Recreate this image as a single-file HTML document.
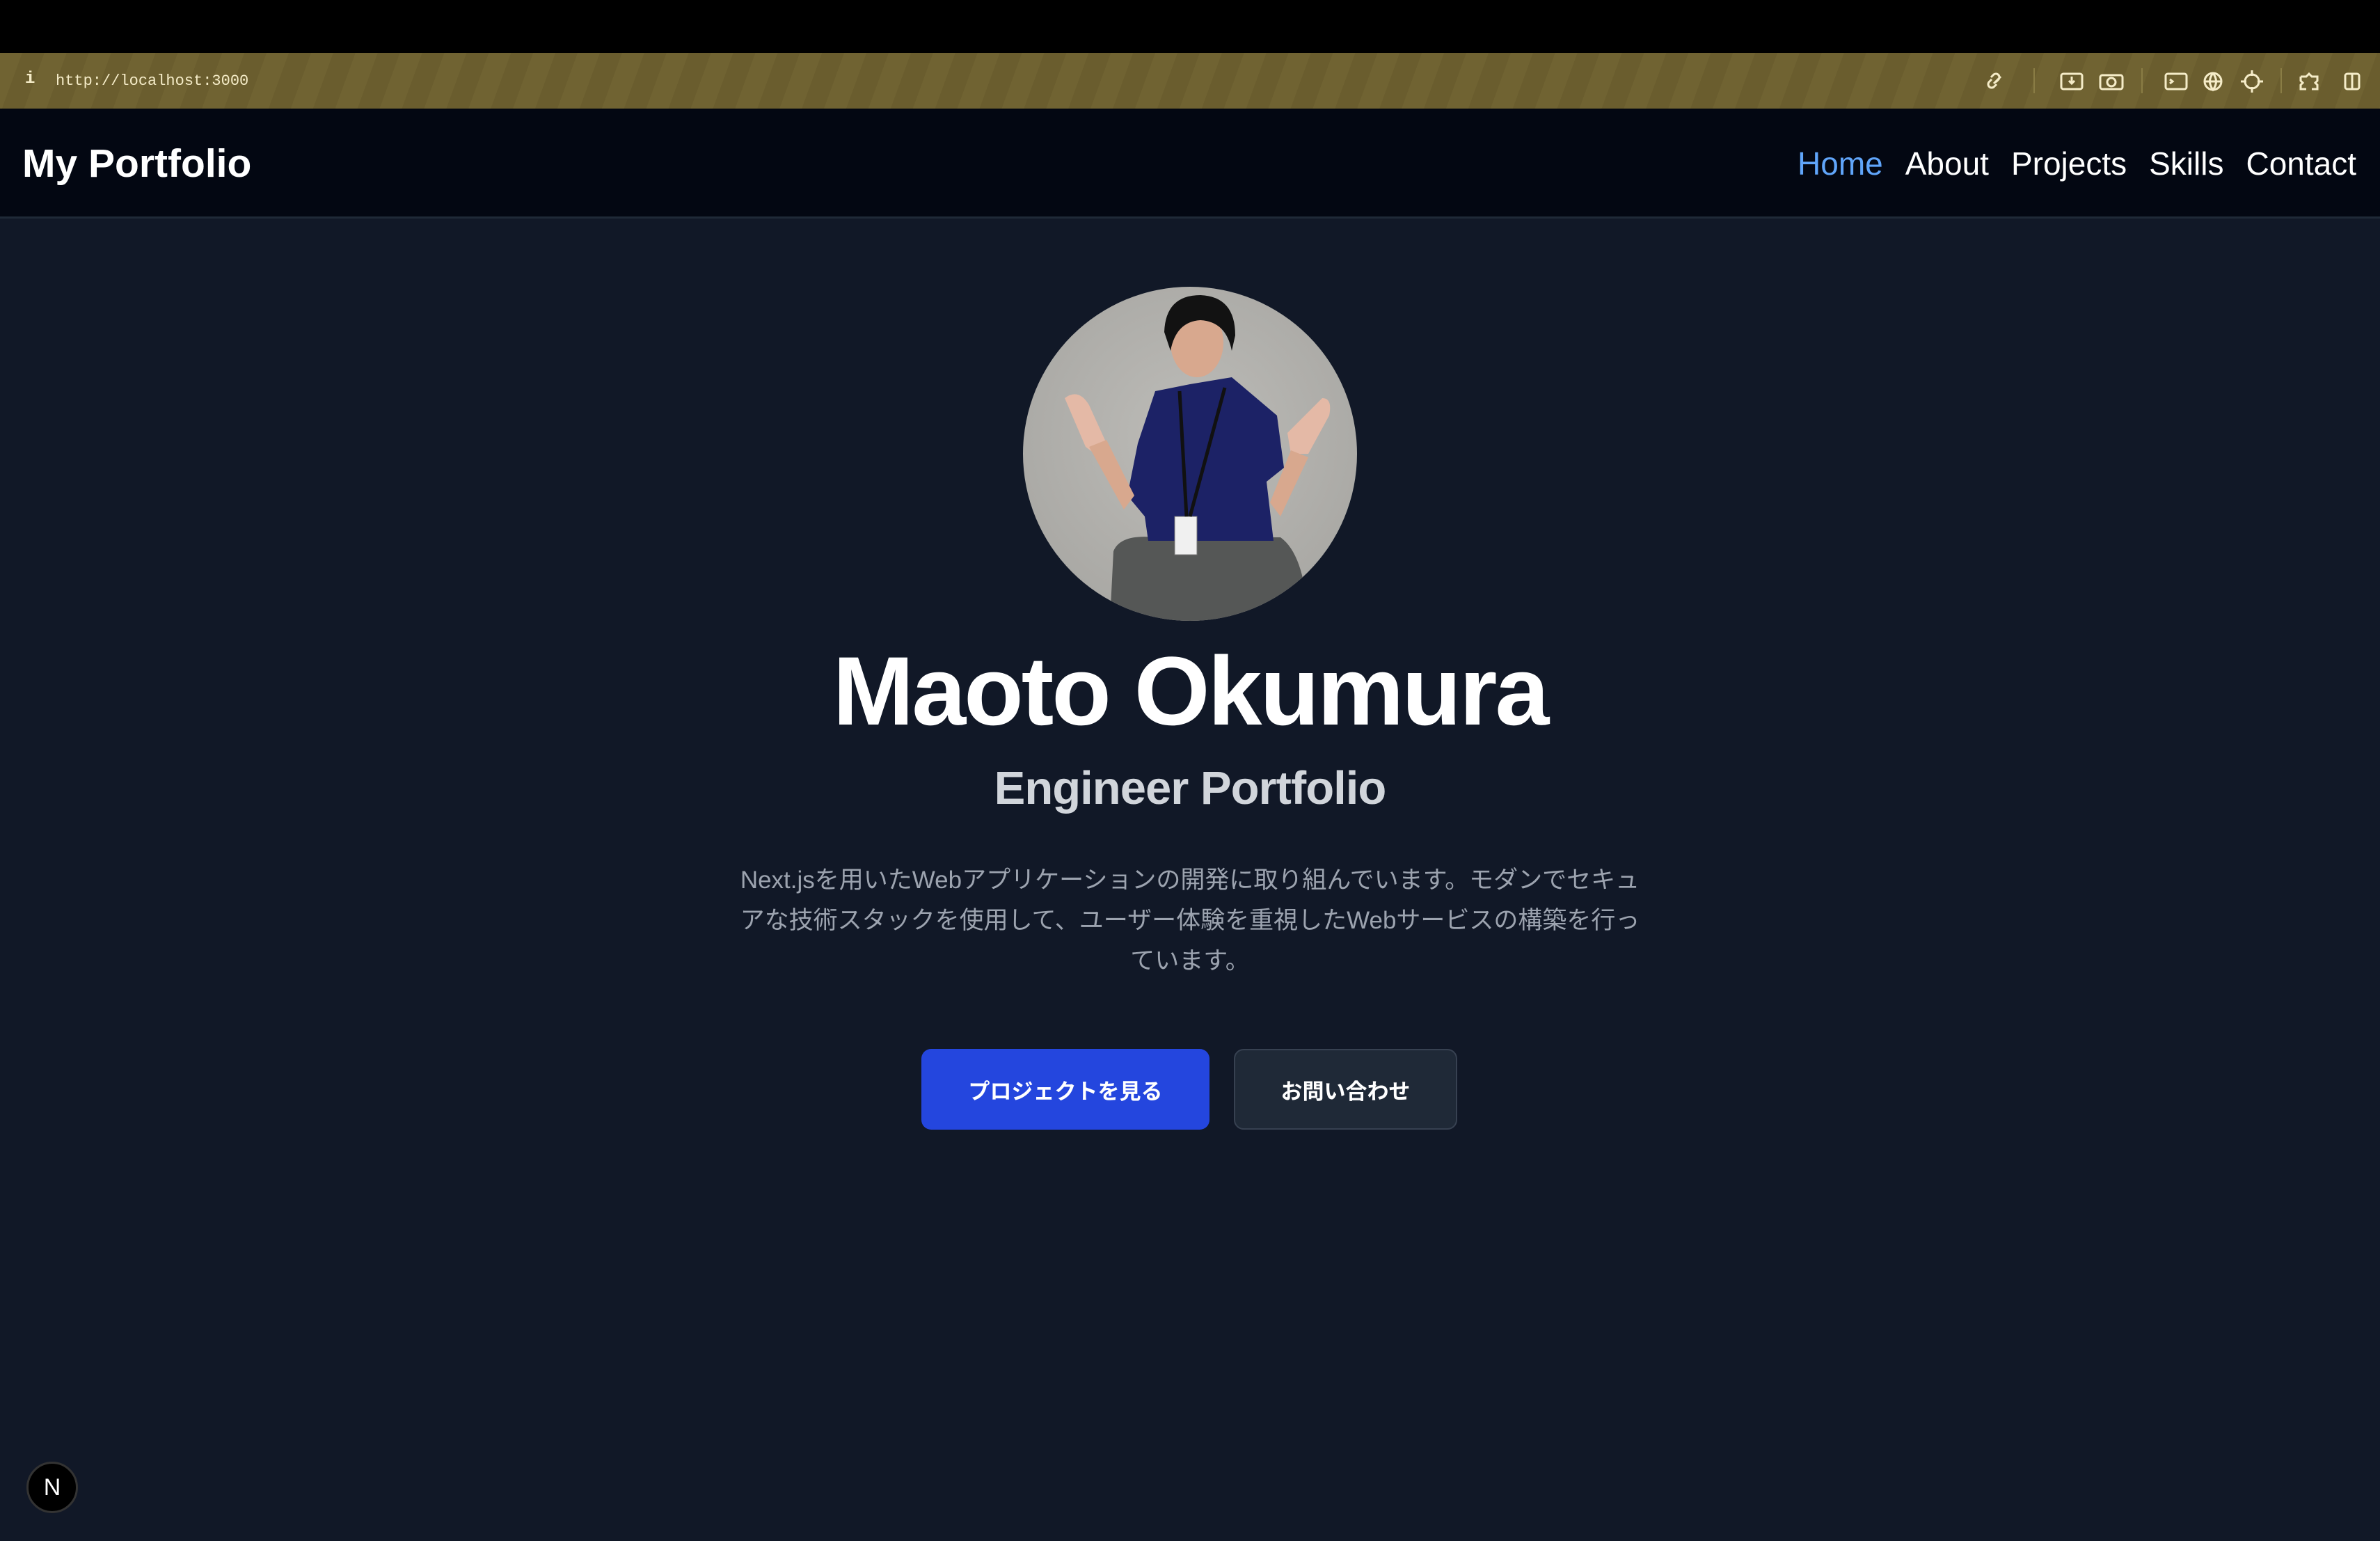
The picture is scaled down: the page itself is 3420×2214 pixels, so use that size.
<!DOCTYPE html>
<html><head><meta charset="utf-8"><style>
*{margin:0;padding:0;box-sizing:border-box}
body{width:3420px;height:2214px;background:#111827;font-family:"Liberation Sans","Noto Sans CJK JP",sans-serif;position:relative;overflow:hidden}
.top{position:absolute;left:0;top:0;width:3420px;height:76px;background:#000}
.bar{position:absolute;left:0;top:76px;width:3420px;height:80px;background:repeating-linear-gradient(110deg,#706332 0 30px,#6a5d2e 30px 60px);color:#f5ecc8;font-family:"Liberation Mono",monospace}
.nav{position:absolute;left:0;top:156px;width:3420px;height:158px;background:#030712;border-bottom:3px solid #1f2937}
.logo{position:absolute;left:32px;top:46px;font-size:57px;font-weight:bold;color:#fff}
.links{position:absolute;right:34px;top:52px;font-size:46px;color:#fff;display:flex;gap:32px}
.c{position:absolute;left:0;width:3420px;text-align:center}
.btn{position:absolute;top:1507px;height:116px;border-radius:14px;color:#fff;font-weight:bold;font-size:31px;display:flex;align-items:center;justify-content:center}
</style></head><body>
<div class="top"></div>
<div class="bar">
<div style="position:absolute;left:36px;top:24px;font-size:24px;font-weight:bold">i</div>
<div style="position:absolute;left:80px;top:28px;font-size:22px">http://localhost:3000</div>
<svg style="position:absolute;left:2840px;top:20px" width="560" height="40" fill="none" stroke="#f5ecc8" stroke-width="3">
<path d="M25 24l10-10M22 18l-4 4a5 5 0 007 7l4-4M28 22l4-4a5 5 0 00-7-7l-4 4"/>
<line x1="83" y1="2" x2="83" y2="38" stroke="#8a7d45" stroke-width="2"/>
<rect x="122" y="10" width="30" height="22" rx="3"/><path d="M137 14v10m-4-4l4 4 4-4"/>
<rect x="178" y="12" width="32" height="20" rx="3"/><circle cx="194" cy="22" r="6"/>
<line x1="238" y1="2" x2="238" y2="38" stroke="#8a7d45" stroke-width="2"/>
<rect x="272" y="10" width="30" height="22" rx="3"/><path d="M278 18l4 3-4 3"/>
<circle cx="340" cy="21" r="12"/><path d="M328 21h24M340 9c-6 8-6 16 0 24c6-8 6-16 0-24"/>
<circle cx="396" cy="21" r="10"/><path d="M396 5v8M396 29v8M380 21h8M404 21h8"/>
<line x1="438" y1="2" x2="438" y2="38" stroke="#8a7d45" stroke-width="2"/>
<path d="M466 14h8l4-4 4 4h8v6l-3 3 3 3v6h-8M466 14v6l3 3-3 3v6h8"/>
<rect x="530" y="10" width="20" height="22" rx="3"/><line x1="540" y1="10" x2="540" y2="32"/>
</svg>
</div>
<div class="nav">
<div class="logo">My Portfolio</div>
<div class="links"><span style="color:#60a5fa">Home</span><span>About</span><span>Projects</span><span>Skills</span><span>Contact</span></div>
</div>
<svg style="position:absolute;left:1470px;top:412px" width="480" height="480" viewBox="0 0 480 480">
<defs><clipPath id="cp"><circle cx="240" cy="240" r="240"/></clipPath>
<radialGradient id="bg" cx="50%" cy="45%" r="60%"><stop offset="0" stop-color="#bdbcb8"/><stop offset="1" stop-color="#a8a7a3"/></radialGradient></defs>
<g clip-path="url(#cp)">
<rect width="480" height="480" fill="url(#bg)"/>
<path d="M125 480L130 380Q140 355 190 360L370 360Q405 385 410 480Z" fill="#555756"/>
<path d="M165 225L150 300L175 330L180 365L360 365L350 280L375 260L365 185L300 130L240 140L190 150Z" fill="#1c2266"/>
<ellipse cx="250" cy="80" rx="38" ry="50" fill="#d8a88e"/>
<path d="M203 65Q205 12 255 12Q305 14 305 70L300 92Q292 50 255 48Q220 50 212 92Z" fill="#121212"/>
<path d="M60 160Q80 145 95 170L120 225L110 245L90 230Z" fill="#e4b9a6"/>
<path d="M430 160Q445 160 440 185L410 240L385 240L380 210Z" fill="#e4b9a6"/>
<path d="M95 230L120 220L160 300L145 320Z" fill="#d8a88e"/>
<path d="M385 235L410 245L370 330L355 310Z" fill="#d8a88e"/>
<rect x="218" y="330" width="32" height="55" fill="#f0f0f0" stroke="#777"/>
<path d="M225 150L235 330M290 145L240 330" stroke="#111" stroke-width="5"/>
</g></svg>
<div class="c" style="top:912px;font-size:140px;font-weight:bold;color:#fff;letter-spacing:-3px">Maoto Okumura</div>
<div class="c" style="top:1094px;font-size:67px;font-weight:bold;color:#d1d5db;letter-spacing:-1px">Engineer Portfolio</div>
<div class="c" style="top:1236px;font-size:35px;line-height:58px;color:#9ca3af"><div style="width:1322px;margin:0 auto">Next.jsを用いたWebアプリケーションの開発に取り組んでいます。モダンでセキュアな技術スタックを使用して、ユーザー体験を重視したWebサービスの構築を行っています。</div></div>
<div class="btn" style="left:1324px;width:414px;background:#2446de">プロジェクトを見る</div>
<div class="btn" style="left:1773px;width:321px;background:#1f2937;border:2px solid #374151">お問い合わせ</div>
<div style="position:absolute;left:38px;top:2100px;width:74px;height:74px;border-radius:50%;background:#000;border:3px solid #333;color:#fff;font-size:34px;display:flex;align-items:center;justify-content:center">N</div>
</body></html>
